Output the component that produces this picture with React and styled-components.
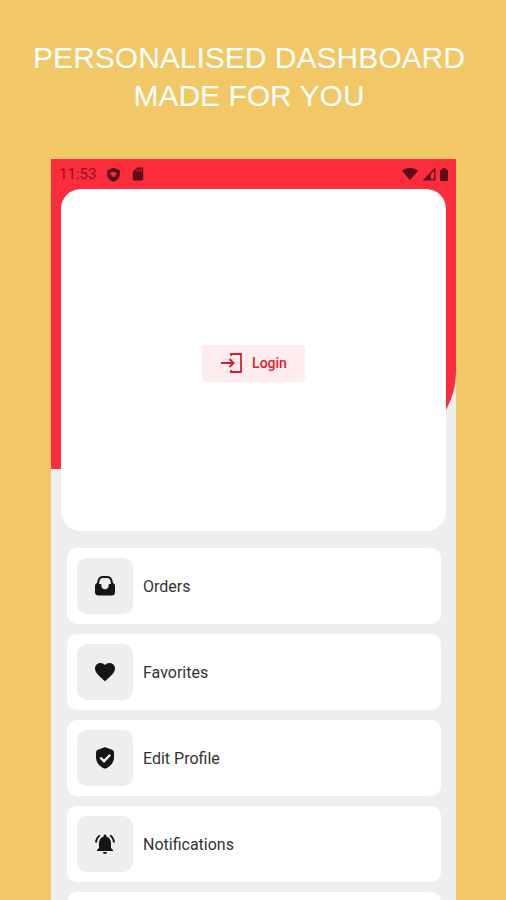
import React from "react";
import styled, { createGlobalStyle } from "styled-components";
import { MdFavorite, MdNotificationsActive } from "react-icons/md";

const InboxIcon = () => (
  <svg viewBox="0 0 24 24" width="24" height="24" fill="currentColor">
    <path
      fillRule="evenodd"
      d="M10 2h4c2.800 0 4.600 1.500 5.300 4l.7 3c1.300.5 2 1.600 2 3v6a3.500 3.500 0 0 1-3.500 3.500h-13A3.500 3.500 0 0 1 2 18v-6c0-1.400.7-2.500 2-3l.7-3C5.400 3.500 7.200 2 10 2zM10 4C8 4 7 5 6.600 6.800L6 10h1.200c.8 0 1.200.5 1.200 1.200V12c0 2 1.400 3.200 3.600 3.200s3.600-1.200 3.600-3.200v-.8c0-.7.4-1.200 1.200-1.200H18l-.6-3.200C17 5 16 4 14 4z"
    />
  </svg>
);

const VerifiedIcon = () => (
  <svg viewBox="0 0 24 24" width="24" height="24">
    <path
      fill="currentColor"
      d="M10.900 1.400a3 3 0 0 1 2.200 0l6 2.400A3 3 0 0 1 21 6.600V11c0 5.200-3 9-7.600 11.200a3.200 3.200 0 0 1-2.800 0C6 20 3 16.200 3 11V6.600a3 3 0 0 1 1.900-2.800z"
    />
    <path
      fill="none"
      stroke="#eeeeee"
      strokeWidth="2.400"
      strokeLinecap="round"
      d="M8 12.200l3 3 5.500-5.700"
    />
  </svg>
);

const LoginIcon = () => (
  <svg viewBox="0 0 24 24" width="24" height="24" fill="none" stroke="currentColor">
    <path d="M11 5V3h10v18H11v-2" strokeWidth="1.800" />
    <path d="M1 12h13M9.500 8l4 4-4 4" strokeWidth="2" />
  </svg>
);

const ShieldIcon = () => (
  <svg viewBox="0 0 24 24" width="15" height="15" fill="currentColor">
    <path
      fillRule="evenodd"
      d="M12 1 2 5v7c0 5.500 4.200 9.700 10 11.500 5.800-1.800 10-6 10-11.500V5zM9.500 7.500 12 8.500l2.500-1L17 10v2l-5 4.500L7 12v-2z"
    />
  </svg>
);

const SdCardIcon = () => (
  <svg viewBox="0 0 24 24" width="14" height="14" fill="currentColor">
    <path
      fillRule="evenodd"
      d="M19 1h-9L3 8v13a2 2 0 0 0 2 2h14a2 2 0 0 0 2-2V3a2 2 0 0 0-2-2zM9.500 4h1.500v4H9.500zm4 0H15v4h-1.500zm4 0H19v4h-1.500z"
    />
  </svg>
);

const WifiIcon = () => (
  <svg viewBox="0 0 24 24" width="16" height="16" fill="currentColor">
    <path d="M12 21.500 0 7C3 4.500 7 3 12 3s9 1.500 12 4z" />
  </svg>
);

const SignalIcon = () => (
  <svg viewBox="0 0 24 24" width="14" height="14" fill="currentColor">
    <path fillRule="evenodd" d="M1 23 23 1v22zM15 12v9h6V6z" />
  </svg>
);

const BatteryIcon = () => (
  <svg viewBox="0 0 10 16" width="8" height="13" fill="currentColor">
    <path d="M3 0h4v2h2a1 1 0 0 1 1 1v12a1 1 0 0 1-1 1H1a1 1 0 0 1-1-1V3a1 1 0 0 1 1-1h2z" />
  </svg>
);

const menu = [
  { label: "Orders", icon: <InboxIcon /> },
  { label: "Favorites", icon: <MdFavorite /> },
  { label: "Edit Profile", icon: <VerifiedIcon /> },
  { label: "Notifications", icon: <MdNotificationsActive /> },
];

const App = () => {
  return (
    <>
      <GlobalStyle />
      <Page>
        <Title>
          PERSONALISED DASHBOARD
          <br />
          MADE FOR YOU
        </Title>
        <Phone>
          <Backdrop />
          <Content>
            <StatusBar>
              <StatusGroup $gap="10px">
                <Clock>11:53</Clock>
                <ShieldIcon />
                <SdCardIcon />
              </StatusGroup>
              <StatusGroup $gap="4px">
                <WifiIcon />
                <SignalIcon />
                <BatteryIcon />
              </StatusGroup>
            </StatusBar>
            <ProfileCard>
              <LoginButton type="button">
                <LoginIcon />
                Login
              </LoginButton>
            </ProfileCard>
            <Menu>
              {menu.map((item) => (
                <MenuItem key={item.label} type="button">
                  <IconBox>{item.icon}</IconBox>
                  {item.label}
                </MenuItem>
              ))}
              <MenuItem type="button" aria-label="More" />
            </Menu>
          </Content>
        </Phone>
      </Page>
    </>
  );
};

export default App;

const GlobalStyle = createGlobalStyle`
  * {
    box-sizing: border-box;
  }

  body {
    margin: 0;
    background: #f2c866;
  }
`;

const Page = styled.main`
  display: flex;
  flex-direction: column;
  height: 100vh;
  overflow: hidden;
  font-family: Roboto, sans-serif;
`;

const Title = styled.h1`
  margin: 0;
  padding: 39px 8px 44px 0;
  font-family: "Liberation Sans", Arial, sans-serif;
  font-size: 30px;
  font-weight: 400;
  line-height: 38px;
  text-align: center;
  color: #ffffff;
`;

const Phone = styled.section`
  display: grid;
  flex-shrink: 0;
  margin: 0 50px 0 51px;
  background: #eeeeee;
`;

const Backdrop = styled.div`
  grid-area: 1 / 1;
  height: 310px;
  background: #fb2c3c;
  border-bottom-right-radius: 125px 97px;
`;

const Content = styled.div`
  grid-area: 1 / 1;
  display: flex;
  flex-direction: column;
  padding: 0 10px;
`;

const StatusBar = styled.div`
  display: flex;
  align-items: center;
  justify-content: space-between;
  height: 30px;
  margin: 0 -2px;
  color: #5c0d18;
`;

const StatusGroup = styled.div`
  display: flex;
  align-items: center;
  gap: ${(props) => props.$gap};
`;

const Clock = styled.span`
  font-size: 15px;
  color: #8a1622;
`;

const ProfileCard = styled.div`
  display: flex;
  align-items: center;
  justify-content: center;
  height: 342px;
  padding-top: 6px;
  border-radius: 20px;
  background: #ffffff;
`;

const LoginButton = styled.button`
  display: flex;
  align-items: center;
  gap: 8px;
  height: 37px;
  padding: 0 18px;
  border: none;
  border-radius: 4px;
  background: #ffecee;
  color: #e31b2e;
  font-family: inherit;
  font-size: 14px;
  font-weight: 500;
  cursor: pointer;
`;

const Menu = styled.nav`
  display: flex;
  flex-direction: column;
  gap: 10px;
  padding: 17px 5px 17px 6px;
`;

const MenuItem = styled.button`
  display: flex;
  align-items: center;
  gap: 10px;
  height: 76px;
  padding: 0 10px;
  border: none;
  border-radius: 10px;
  background: #ffffff;
  color: #333333;
  font-family: inherit;
  font-size: 16px;
  cursor: pointer;
`;

const IconBox = styled.span`
  display: flex;
  align-items: center;
  justify-content: center;
  width: 56px;
  height: 56px;
  border-radius: 10px;
  background: #eeeeee;
  color: #151515;
  font-size: 24px;
`;
